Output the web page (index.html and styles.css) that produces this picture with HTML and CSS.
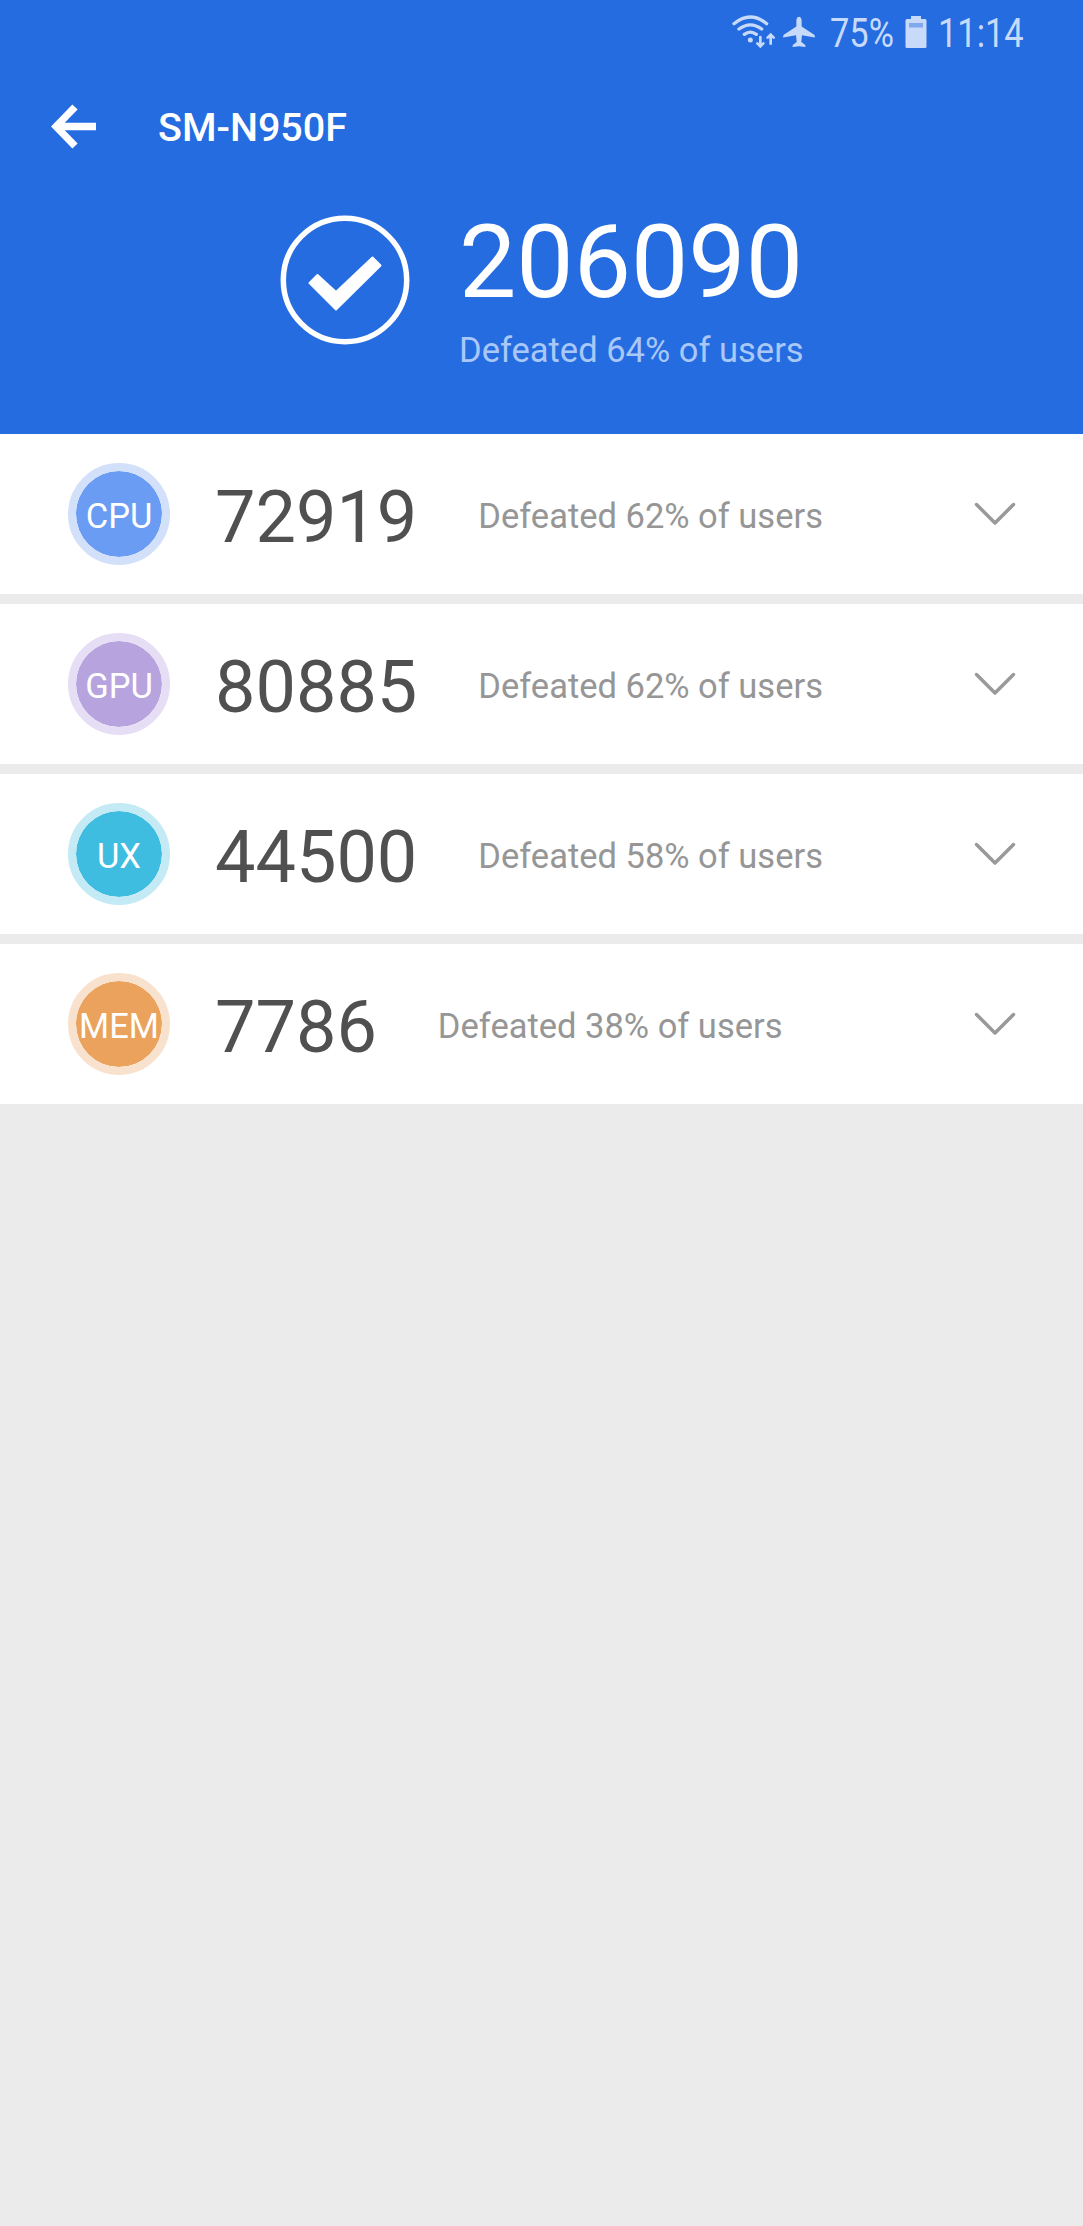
FILE: index.html
```html
<!DOCTYPE html>
<html lang="en">

<head>
  <meta charset="UTF-8">
  <meta name="viewport" content="width=device-width, initial-scale=1.0">
  <title>SM-N950F</title>
  <link rel="stylesheet" href="styles.css">
</head>

<body>
  <header class="header">
    <div class="status-bar">
      <svg class="wifi-icon" viewBox="36 42 132 108">
        <path d="M42 71Q91 31 140 71M57 87Q91 62 125 87M73 103Q91 90 109 103" />
        <circle cx="91" cy="120" r="7.500" />
        <path class="wifi-arrows" d="M121 111V138M112 130L121 139L130 130M152 131V106M143 113L152 104L161 113" />
      </svg>
      <svg class="plane-icon" viewBox="186 44 102 100">
        <path d="M237 49Q245 50 245 62V79L283 104Q286 107 285 112L246 105L244 126L255 134Q258 138 256 141L237 139L218 141Q216 138 219 134L230 126L228 105L189 112Q188 107 191 104L229 79V62Q229 50 237 49Z" />
      </svg>
      <span class="status-text battery-level">75%</span>
      <svg class="battery-icon" viewBox="0 0 22 33">
        <path d="M6 0H16V3H20Q21.500 3 21.500 4.500V31Q21.500 32 20 32H2Q.5 32 .5 31V4.500Q.5 3 2 3H6Z" />
        <path class="battery-empty" d="M4 7H18V11.500H4Z" />
      </svg>
      <span class="status-text clock">11:14</span>
    </div>
    <div class="title-bar">
      <svg class="back-icon" viewBox="0 0 46 46">
        <path d="M45 22.500H7M24 3L5 22.500L24 42" />
      </svg>
      <h1 class="title">SM-N950F</h1>
    </div>
    <div class="summary">
      <svg class="check-icon" viewBox="0 0 130 130">
        <circle cx="65" cy="65" r="61.700" />
        <path d="M29.500 68L37.500 60L56 77L92.500 42.500L100.500 50.500L56 94.500Z" />
      </svg>
      <div class="total">
        <div class="total-score">206090</div>
        <div class="total-rank">Defeated 64% of users</div>
      </div>
    </div>
  </header>

  <main class="results">
    <div class="row">
      <div class="badge cpu">CPU</div>
      <div class="score">72919</div>
      <div class="rank">Defeated 62% of users</div>
      <svg class="chevron" viewBox="0 0 42 24"><path d="M2.500 2.500L21 21L39.500 2.500" /></svg>
    </div>
    <div class="row">
      <div class="badge gpu">GPU</div>
      <div class="score">80885</div>
      <div class="rank">Defeated 62% of users</div>
      <svg class="chevron" viewBox="0 0 42 24"><path d="M2.500 2.500L21 21L39.500 2.500" /></svg>
    </div>
    <div class="row">
      <div class="badge ux">UX</div>
      <div class="score">44500</div>
      <div class="rank">Defeated 58% of users</div>
      <svg class="chevron" viewBox="0 0 42 24"><path d="M2.500 2.500L21 21L39.500 2.500" /></svg>
    </div>
    <div class="row">
      <div class="badge mem">MEM</div>
      <div class="score">7786</div>
      <div class="rank">Defeated 38% of users</div>
      <svg class="chevron" viewBox="0 0 42 24"><path d="M2.500 2.500L21 21L39.500 2.500" /></svg>
    </div>
  </main>
</body>

</html>
```
FILE: styles.css
```css
* {
  box-sizing: border-box;
}

body {
  margin: 0;
  min-height: 2226px;
  font-family: Roboto, sans-serif;
  background-color: #ebebeb;
}

.header {
  height: 434px;
  background-color: #256ce1;
  color: #fff;
}

/* status bar */
.status-bar {
  display: flex;
  align-items: center;
  height: 66px;
  padding-left: 732px;
  color: #c8dafa;
}

.wifi-icon {
  width: 44px;
  height: 36px;
  margin-top: -2px;
  fill: none;
  stroke: #c8dafa;
  stroke-width: 10;
  stroke-linecap: round;
}

.wifi-icon circle {
  fill: #c8dafa;
  stroke: none;
}

.wifi-arrows {
  stroke-width: 8;
}

.plane-icon {
  width: 34px;
  height: 33px;
  margin-top: -4px;
  margin-left: 6px;
  fill: #c8dafa;
}

.status-text {
  padding-top: 2px;
  font-size: 40px;
  line-height: 64px;
  transform: scaleX(0.86);
  transform-origin: left;
}

.battery-level {
  width: 64px;
  margin-left: 14px;
}

.battery-icon {
  width: 22px;
  height: 33px;
  margin-top: -1px;
  margin-left: 11px;
  fill: #c8dafa;
}

.battery-icon .battery-empty {
  fill: #7fa8ed;
}

.clock {
  margin-left: 11px;
}

/* title bar */
.title-bar {
  display: flex;
  align-items: center;
  height: 122px;
  padding-left: 51px;
}

.back-icon {
  width: 46px;
  height: 46px;
  fill: none;
  stroke: #fff;
  stroke-width: 7.3;
}

.title {
  margin: 0 0 0 61px;
  font-size: 39.5px;
  font-weight: 500;
}

/* total score */
.summary {
  display: flex;
  padding: 27px 0 0 280px;
}

.check-icon {
  width: 130px;
  height: 130px;
  fill: #fff;
}

.check-icon path {
  stroke: #fff;
  stroke-width: 2;
  stroke-linejoin: round;
}

.check-icon circle {
  fill: none;
  stroke: #fff;
  stroke-width: 5.5;
}

.total {
  margin-left: 49px;
}

.total-score {
  font-size: 102px;
  line-height: 94px;
}

.total-rank {
  margin-top: 20px;
  font-size: 34.5px;
  line-height: 42px;
  color: #a9c8f8;
}

/* result rows */
.results {
  display: flex;
  flex-direction: column;
  gap: 10px;
}

.row {
  display: flex;
  align-items: center;
  height: 160px;
  padding: 0 67px 0 68px;
  background-color: #fff;
}

.badge {
  display: flex;
  align-items: center;
  justify-content: center;
  width: 102px;
  height: 102px;
  padding-top: 3px;
  border: 8px solid;
  border-radius: 50%;
  background-clip: padding-box;
  font-size: 34.5px;
  color: #fff;
}

.cpu {
  background-color: #6a9cf3;
  border-color: #d2e0fa;
}

.gpu {
  background-color: #b7a3de;
  border-color: #e6def4;
}

.ux {
  background-color: #3ebde1;
  border-color: #c3eaf5;
}

.mem {
  background-color: #eaa25c;
  border-color: #f8e2cd;
}

.score {
  padding-top: 6px;
  margin-left: 45px;
  font-size: 72px;
  color: #505050;
}

.rank {
  padding-top: 4px;
  margin-left: 61px;
  font-size: 34.5px;
  color: #969696;
}

.chevron {
  width: 42px;
  height: 24px;
  margin-left: auto;
  fill: none;
  stroke: #999;
  stroke-width: 3.5;
  stroke-linecap: round;
  stroke-linejoin: round;
}
```
